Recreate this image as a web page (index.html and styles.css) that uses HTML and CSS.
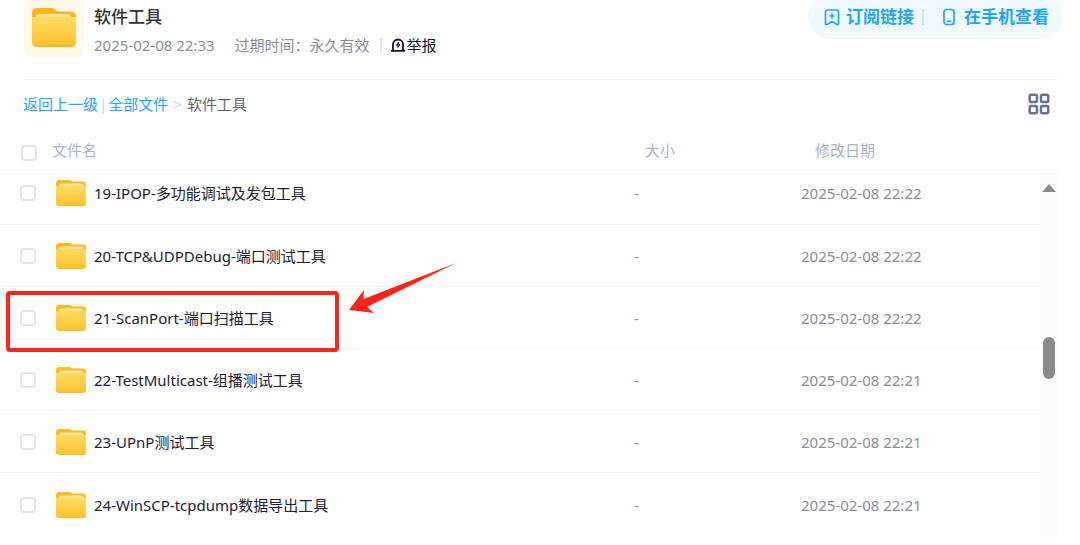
FILE: index.html
```html
<!DOCTYPE html>
<html lang="zh-CN">
<head>
<meta charset="utf-8">
<meta name="viewport" content="width=device-width, initial-scale=1">
<title>软件工具</title>
<link rel="stylesheet" href="styles.css">
</head>
<body>
<svg class="defs" aria-hidden="true">
  <defs>
    <linearGradient id="front" x1="0" y1="0" x2="0" y2="1">
      <stop offset="0" stop-color="#ffdb62"/>
      <stop offset="1" stop-color="#ffc42e"/>
    </linearGradient>
    <linearGradient id="paper" x1="0" y1="0" x2="0" y2="1">
      <stop offset="0" stop-color="#ffe7b0"/>
      <stop offset="1" stop-color="#ffd966"/>
    </linearGradient>
    <symbol id="folder" viewBox="0 0 30 26">
      <path d="M0 3Q0 0 3 0H13.500Q14.500 0 15.500 .8L16.500 1.500H27Q30 1.500 30 4.500V12H0Z" fill="#ffb91a"/>
      <path d="M3 6Q3 3.500 5.500 3.500H25Q27.500 3.500 27.500 6V9H3Z" fill="url(#paper)"/>
      <path d="M0 6H30V23Q30 26 27 26H3Q0 26 0 23Z" fill="#fdbb1c"/>
      <path d="M0 6H30V22Q30 25 27 25H3Q0 25 0 22Z" fill="url(#front)"/>
    </symbol>
  </defs>
</svg>
<main class="page">
  <header class="share">
    <div class="tile"><svg class="tile-icon" viewBox="0 0 44 39" aria-hidden="true">
      <path d="M0 5Q0 0 5 0H19Q21 0 22.500 1.200L25 3.500H38Q44 3.500 44 9V18H0Z" fill="#ffb31a"/>
      <path d="M4 9Q4 6 7 6H36Q39 6 39 9V13H4Z" fill="url(#paper)"/>
      <path d="M0 9H44V33Q44 39 39 39H5Q0 39 0 33Z" fill="#fcb814"/>
      <path d="M0 9H44V32Q44 37 39 37H5Q0 37 0 32Z" fill="url(#front)"/>
    </svg></div>
    <div class="share-info">
      <h1 class="title">软件工具</h1>
      <div class="meta">
        <span>2025-02-08 22:33</span>
        <span class="expiry">过期时间：永久有效</span>
        <button class="report" type="button">
          <svg width="14" height="14" viewBox="0 0 14 14" fill="none" stroke="#10152b" stroke-width="1.800" aria-hidden="true"><path d="M2 12.500V6.500A5 5 0 0 1 12 6.500V12.500M0 12.800H14"/><path d="M7.800 4.300L5.800 7H8.300L6.600 9.700" stroke-width="1.400"/></svg>举报
        </button>
      </div>
    </div>
    <div class="pill">
      <button class="pill-btn" type="button">
        <svg width="16" height="18" viewBox="0 0 16 18" fill="none" stroke="#1ca5fb" stroke-width="1.700" stroke-linejoin="round" aria-hidden="true"><path d="M1.500 4Q1.500 2 3.500 2H12.500Q14.500 2 14.500 4V16.500H13L8 13.500L3 16.500H1.500Z"/><path d="M8 5.500V10.500M5.500 8H10.500"/></svg>订阅链接
      </button>
      <button class="pill-btn pill-phone" type="button">
        <svg width="12" height="18" viewBox="0 0 12 18" fill="none" stroke="#1ca5fb" stroke-width="1.700" aria-hidden="true"><rect x="1" y="1.500" width="10" height="15" rx="2.500"/><path d="M4 13.300H8.500"/></svg>在手机查看
      </button>
    </div>
  </header>
  <div class="toolbar">
    <nav class="crumbs" aria-label="路径">
      <a href="#">返回上一级</a><span class="bar">|</span><a href="#">全部文件</a><span class="arrow-sep">&gt;</span><span>软件工具</span>
    </nav>
    <button class="grid-btn" type="button" aria-label="网格视图">
      <svg width="22" height="22" viewBox="0 0 22 22" fill="none" stroke="#65719a" stroke-width="2.500" aria-hidden="true"><rect x="1.700" y="1.700" width="7.300" height="7.300" rx="1.500"/><rect x="13" y="1.700" width="7.300" height="7.300" rx="1.500"/><rect x="1.700" y="13" width="7.300" height="7.300" rx="1.500"/><rect x="13" y="13" width="7.300" height="7.300" rx="1.500"/></svg>
    </button>
  </div>
  <section class="list">
    <table class="files">
      <thead>
        <tr><th class="check"><input type="checkbox" aria-label="全选"></th><th class="name">文件名</th><th class="size">大小</th><th class="date">修改日期</th></tr>
      </thead>
      <tbody>
        <tr class="clipped"><td class="check"><input type="checkbox" id="f19"></td><td class="name"><label class="file" for="f19"><svg class="folder"><use href="#folder"/></svg>19-IPOP-多功能调试及发包工具</label></td><td>-</td><td>2025-02-08 22:22</td></tr>
        <tr><td class="check"><input type="checkbox" id="f20"></td><td class="name"><label class="file" for="f20"><svg class="folder"><use href="#folder"/></svg>20-TCP&amp;UDPDebug-端口测试工具</label></td><td>-</td><td>2025-02-08 22:22</td></tr>
        <tr class="marked"><td class="check"><input type="checkbox" id="f21"><span class="mark-box"></span><svg class="mark-arrow" viewBox="0 0 108 50" aria-hidden="true"><path d="M1 47L16 27L15.500 36L108 0L19 44L26 50Z" fill="#ff2418"/></svg></td><td class="name"><label class="file" for="f21"><svg class="folder"><use href="#folder"/></svg>21-ScanPort-端口扫描工具</label></td><td>-</td><td>2025-02-08 22:22</td></tr>
        <tr><td class="check"><input type="checkbox" id="f22"></td><td class="name"><label class="file" for="f22"><svg class="folder"><use href="#folder"/></svg>22-TestMulticast-组播测试工具</label></td><td>-</td><td>2025-02-08 22:21</td></tr>
        <tr><td class="check"><input type="checkbox" id="f23"></td><td class="name"><label class="file" for="f23"><svg class="folder"><use href="#folder"/></svg>23-UPnP测试工具</label></td><td>-</td><td>2025-02-08 22:21</td></tr>
        <tr><td class="check"><input type="checkbox" id="f24"></td><td class="name"><label class="file" for="f24"><svg class="folder"><use href="#folder"/></svg>24-WinSCP-tcpdump数据导出工具</label></td><td>-</td><td>2025-02-08 22:21</td></tr>
      </tbody>
    </table>
    <div class="scrollbar" aria-hidden="true">
      <svg width="14" height="8" viewBox="0 0 14 8"><path d="M7 0L14 8H0Z" fill="#8b8b8b"/></svg>
      <span class="thumb"></span>
    </div>
  </section>
</main>
</body>
</html>
```
FILE: styles.css
```css
* { box-sizing: border-box; }
body {
  margin: 0;
  background: #fff;
  color: #1b2038;
  font: 15px/20px "Noto Sans", "Noto Sans CJK SC", sans-serif;
}
button {
  display: flex;
  align-items: center;
  padding: 0;
  border: 0;
  background: none;
  color: inherit;
  font: inherit;
  cursor: pointer;
}
a { color: #1ca5fb; text-decoration: none; }
.defs { position: absolute; width: 0; height: 0; }
.page { overflow: hidden; padding-right: 22px; }

.share {
  display: flex;
  align-items: flex-start;
  height: 80px;
  margin-left: 24px;
  border-bottom: 1px solid #f4f5f8;
}
.tile {
  display: flex;
  justify-content: center;
  align-items: center;
  width: 60px;
  height: 60px;
  margin-top: -3px;
  border-radius: 8px;
  background: #fff9ec;
}
.tile-icon { width: 44px; height: 39px; }
.share-info { flex: 1; padding: 7px 0 0 10px; }
.title {
  margin: 0 0 8px;
  color: #333;
  font-size: 17px;
  font-weight: 500;
  line-height: 20px;
}
.meta { display: flex; align-items: center; color: #878c9c; }
.expiry { margin-left: 20px; }
.report {
  gap: 2px;
  margin-left: 10px;
  padding-left: 9px;
  border-left: 2px solid #e1e4ec;
  height: 14px;
  color: #10152b;
}
.pill {
  display: flex;
  align-items: center;
  height: 44px;
  margin: -5px -4px 0 0;
  padding: 0 13px 0 16px;
  border-radius: 22px;
  background: #f0f9ff;
  color: #1ca5fb;
  font-size: 17px;
  font-weight: 700;
}
.pill-btn { gap: 6px; height: 16px; }
.pill-phone {
  gap: 9px;
  margin-left: 8px;
  padding-left: 19px;
  border-left: 2px solid #c3e7fe;
}

.toolbar {
  display: flex;
  justify-content: space-between;
  align-items: center;
  height: 47px;
  padding: 0 8px 0 23px;
}
.crumbs { display: flex; color: #666; }
.bar { margin: 0 1px; color: #b9dcf8; }
.arrow-sep { margin: 0 5px; color: #b9dcf8; }

.list { display: flex; }
.files {
  flex: 1;
  border-collapse: separate;
  border-spacing: 0;
  table-layout: fixed;
}
th, td {
  height: 62px;
  padding: 0;
  border-bottom: 1px solid #f3f5fb;
  text-align: left;
  font-weight: 400;
}
td { color: #878c9c; }
th { height: 47px; color: #a9b2c7; }
th.check { width: 52px; padding: 5px 0 0 21px; }
th.size { width: 167px; padding-left: 11px; }
th.date { width: 239px; padding-left: 14px; }
td.check { padding-left: 20px; }
td.name { padding-left: 4px; color: #1b2038; }
.clipped td { height: 51px; padding-bottom: 13px; }
tbody tr:last-child td { height: 64px; border-bottom: 0; }
input {
  display: block;
  appearance: none;
  width: 16px;
  height: 16px;
  margin: 0;
  border: 2px solid #e4e4e6;
  border-radius: 4px;
  background: #fff;
}
.file { display: flex; align-items: center; gap: 8px; }
.folder { width: 30px; height: 26px; }

.marked { position: relative; }
.mark-box {
  position: absolute;
  top: 4px;
  left: 6px;
  width: 333px;
  height: 61px;
  border: 4px solid #ff2418;
  border-radius: 4px;
  pointer-events: none;
}
.mark-arrow {
  position: absolute;
  top: -24px;
  left: 348px;
  width: 108px;
  height: 50px;
  pointer-events: none;
}

.scrollbar {
  display: flex;
  flex-direction: column;
  align-items: center;
  width: 18px;
  margin-top: 46px;
  padding-top: 10px;
  border-top: 1px solid #f3f5fb;
  background: #fcfcfc;
}
.thumb {
  width: 12px;
  height: 42px;
  margin-top: 145px;
  border-radius: 6px;
  background: #8b8b8b;
}
```
